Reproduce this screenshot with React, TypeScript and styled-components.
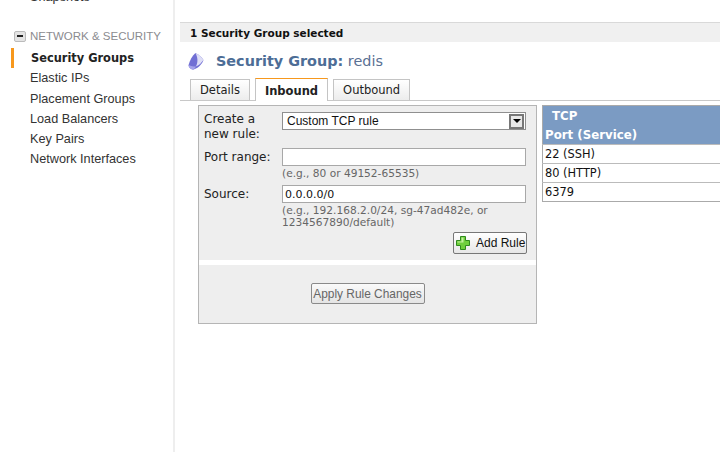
import React from 'react'
import styled, { createGlobalStyle } from 'styled-components'

const GlobalStyle = createGlobalStyle`
    html, body {
        margin: 0;
        padding: 0;
        width: 720px;
        height: 452px;
        overflow: hidden;
        background: #fff;
    }
`

const Page = styled.div`
    display: flex;
    width: 720px;
    height: 452px;
    overflow: hidden;
    font-family: "DejaVu Sans", Verdana, sans-serif;
    font-size: 11px;
    color: #111;
`

const Sidebar = styled.aside`
    flex: none;
    width: 175px;
    height: 100%;
    box-sizing: border-box;
    border-right: 2px solid #eeeeee;
    font-family: "Liberation Sans", Arial, sans-serif;
    font-size: 12.7px;
    overflow: hidden;
`

const CutItem = styled.div`
    margin: -13px 0 0 30px;
    height: 20px;
    line-height: 20px;
    color: #333;
`

const SectionHead = styled.div`
    display: flex;
    align-items: center;
    gap: 4px;
    margin: 19px 0 0 14px;
    height: 20px;
    font-size: 11.5px;
    color: #8b8b8f;
`

const Toggle = styled.span`
    display: flex;
    align-items: center;
    justify-content: center;
    width: 10px;
    height: 9px;
    border: 1px solid #bbb;
    border-radius: 2px;
    background: #e4e4e4;

    &::before {
        content: '';
        width: 6px;
        height: 2px;
        background: #222;
    }
`

const NavList = styled.div`
    display: flex;
    flex-direction: column;
    margin: 2px 0 0 11px;
`

const NavItem = styled.div<{ $active?: boolean }>`
    height: 20.3px;
    line-height: 20px;
    box-sizing: border-box;
    padding-left: ${p => (p.$active ? 17 : 16)}px;
    border-left: 3px solid ${p => (p.$active ? '#f7981d' : 'transparent')};
    color: ${p => (p.$active ? '#222' : '#333')};
    font-weight: ${p => (p.$active ? 700 : 400)};
    ${p => p.$active && 'font-family: "DejaVu Sans", Verdana, sans-serif; font-size: 11.4px;'}
`

const Main = styled.main`
    flex: 1;
    min-width: 0;
    padding: 22px 0 0 5px;
`

const SelectedBar = styled.div`
    height: 20px;
    line-height: 21px;
    box-sizing: border-box;
    padding-left: 10px;
    border-top: 1px solid #d9d9d9;
    background: #f0f0f0;
    font-weight: 700;
    font-size: 10.5px;
    color: #111;
`

const Heading = styled.h2`
    display: flex;
    align-items: center;
    gap: 12px;
    height: 36px;
    margin: 0;
    padding: 1px 0 0 8px;
    box-sizing: border-box;
    font-size: 14.4px;
    font-weight: 400;
    color: #5a7094;
`

const HeadLabel = styled.span`
    font-weight: 700;
    color: #4d6d96;
`

const TabRow = styled.div`
    display: flex;
    align-items: flex-end;
    gap: 5px;
    height: 22px;
    padding-left: 10px;
    border-bottom: 1px solid #c8c8c8;
`

const Tab = styled.div<{ $active?: boolean }>`
    box-sizing: border-box;
    padding: 0 9px;
    height: ${p => (p.$active ? 23 : 21)}px;
    line-height: ${p => (p.$active ? 24 : 20)}px;
    border: 1px solid #c4c4c4;
    border-bottom: none;
    ${p => p.$active && 'border-top: 1px solid #f7981d; margin-bottom: -1px; background: #fff; font-weight: 700;'}
    ${p => !p.$active && 'background: linear-gradient(#ffffff, #ececec);'}
    font-size: 11.5px;
    color: #222;
`

const Content = styled.div`
    display: flex;
    align-items: flex-start;
    gap: 5px;
    margin: 4px 0 0 18px;
`

const RuleForm = styled.section`
    flex: none;
    width: 339px;
    height: 219px;
    box-sizing: border-box;
    border: 1px solid #b5b5b5;
    background: #eeeeee;
`

const FormFields = styled.div`
    display: grid;
    grid-template-columns: 78px 244px;
    grid-template-rows: 37px 37px auto auto;
    padding: 5px 0 0 5px;
    height: 154px;
    box-sizing: border-box;
`

const FieldLabel = styled.label<{ $top: number }>`
    padding-top: ${p => p.$top}px;
    font-size: 12px;
    line-height: 15px;
    color: #222;
`

const FieldBody = styled.div<{ $top?: number }>`
    display: flex;
    flex-direction: column;
    padding-top: ${p => p.$top ?? 0}px;
`

const Select = styled.div`
    display: flex;
    align-items: center;
    justify-content: space-between;
    width: 244px;
    height: 18px;
    box-sizing: border-box;
    padding: 0 1px 0 4px;
    border: 1px solid #8f8f8f;
    background: #fff;
    font-family: "Liberation Sans", Arial, sans-serif;
    font-size: 12px;
    color: #111;
`

const SelectArrow = styled.span`
    display: flex;
    align-items: center;
    justify-content: center;
    width: 15px;
    height: 15px;
    box-sizing: border-box;
    border: 2px solid #777;
    background: #e8e8e8;

    &::before {
        content: '';
        border-left: 4px solid transparent;
        border-right: 4px solid transparent;
        border-top: 4px solid #000;
    }
`

const TextBox = styled.div`
    width: 244px;
    height: 18px;
    box-sizing: border-box;
    padding-left: 2px;
    border: 1px solid #a8a8a8;
    background: #fff;
    line-height: 17px;
    font-size: 11px;
    color: #111;
`

const Hint = styled.div`
    font-size: 10.6px;
    line-height: 12px;
    padding-top: 1px;
    color: #666;
`

const ButtonRow = styled.div`
    display: flex;
    justify-content: flex-end;
    margin: 4px -1px 0 0;
`

const AddButton = styled.button`
    display: flex;
    align-items: center;
    gap: 5px;
    width: 74px;
    height: 22px;
    padding: 0 0 0 1px;
    border: 1px solid #777;
    border-radius: 2px;
    background: linear-gradient(#ffffff, #e6e6e6);
    font-family: "Liberation Sans", Arial, sans-serif;
    font-size: 12px;
    color: #111;
`

const Divider = styled.div`
    height: 5px;
    background: #fff;
`

const ApplyRow = styled.div`
    display: flex;
    justify-content: center;
    padding: 18px 0 0 0;
`

const ApplyButton = styled.button`
    width: 114px;
    height: 21px;
    padding: 1px 0 0;
    border: 1px solid #8a8a8a;
    border-radius: 2px;
    background: linear-gradient(#fafafa, #e4e4e4);
    font-family: "Liberation Sans", Arial, sans-serif;
    font-size: 11.9px;
    color: #666;
`

const PortTable = styled.table`
    width: 190px;
    border-collapse: collapse;
    border: 1px solid #aaa;
    border-right: none;
    font-size: 11.4px;
    color: #111;
`

const HeadCell = styled.th<{ $indent?: boolean }>`
    height: 19px;
    padding: 0 0 0 ${p => (p.$indent ? 9 : 2)}px;
    background: #7b9bc3;
    color: #fff;
    text-align: left;
    font-weight: 700;
    font-size: 11.8px;
`

const BodyCell = styled.td`
    height: 18px;
    padding: 0 0 0 2px;
    border-top: 1px solid #bbb;
`

const PlusIcon = () => (
    <svg width="16" height="16" viewBox="0 0 16 16">
        <path
            d="M5.5 1.5h5v4h4v5h-4v4h-5v-4h-4v-5h4z"
            fill="#6fcf3c"
            stroke="#2f8a1c"
            strokeWidth="1"
        />
        <path d="M6.5 2.5h2v4h-2zM2.5 6.5h6v1h-6z" fill="#c4f0a0" />
    </svg>
)

const GroupIcon = () => (
    <svg width="16" height="18" viewBox="0 0 14 18" preserveAspectRatio="none">
        <path d="M6.5 1C9 2.5 12 5 13.5 8 12.5 12 9 16 5 17.5 2.500 17.500.5 15.500.5 13 1.500 8.500 3.500 4 6.500 1z" fill="#716fd4" />
        <path d="M6.500 1C9 2.500 12 5 13.500 8 12 10.500 10 13 7 14.500 9 10 8.500 5 6.500 1z" fill="#dedef6" />
        <path d="M.5 13c2 1 4.500 1.500 6.500 1.500-.5 1-1 2-2 3-2.500 0-4.500-2-4.500-4.500z" fill="#a5a3ea" />
    </svg>
)

const navItems = ['Elastic IPs', 'Placement Groups', 'Load Balancers', 'Key Pairs', 'Network Interfaces']
const ports = ['22 (SSH)', '80 (HTTP)', '6379']

export default function App() {
    return (
        <Page>
            <GlobalStyle />
            <Sidebar>
                <CutItem>Snapshots</CutItem>
                <SectionHead>
                    <Toggle />
                    NETWORK &amp; SECURITY
                </SectionHead>
                <NavList>
                    <NavItem $active>Security Groups</NavItem>
                    {navItems.map(item => (
                        <NavItem key={item}>{item}</NavItem>
                    ))}
                </NavList>
            </Sidebar>
            <Main>
                <SelectedBar>1 Security Group selected</SelectedBar>
                <Heading>
                    <GroupIcon />
                    <span>
                        <HeadLabel>Security Group:</HeadLabel> redis
                    </span>
                </Heading>
                <TabRow>
                    <Tab>Details</Tab>
                    <Tab $active>Inbound</Tab>
                    <Tab>Outbound</Tab>
                </TabRow>
                <Content>
                    <RuleForm>
                        <FormFields>
                            <FieldLabel $top={1}>
                                Create a
                                <br />
                                new rule:
                            </FieldLabel>
                            <FieldBody $top={1}>
                                <Select>
                                    Custom TCP rule
                                    <SelectArrow />
                                </Select>
                            </FieldBody>
                            <FieldLabel $top={2}>Port range:</FieldLabel>
                            <FieldBody>
                                <TextBox />
                                <Hint>(e.g., 80 or 49152-65535)</Hint>
                            </FieldBody>
                            <FieldLabel $top={2}>Source:</FieldLabel>
                            <FieldBody>
                                <TextBox>0.0.0.0/0</TextBox>
                                <Hint>
                                    (e.g., 192.168.2.0/24, sg-47ad482e, or
                                    <br />
                                    1234567890/default)
                                </Hint>
                                <ButtonRow>
                                    <AddButton>
                                        <PlusIcon />
                                        Add Rule
                                    </AddButton>
                                </ButtonRow>
                            </FieldBody>
                        </FormFields>
                        <Divider />
                        <ApplyRow>
                            <ApplyButton>Apply Rule Changes</ApplyButton>
                        </ApplyRow>
                    </RuleForm>
                    <PortTable>
                        <thead>
                            <tr>
                                <HeadCell $indent>TCP</HeadCell>
                            </tr>
                            <tr>
                                <HeadCell>Port (Service)</HeadCell>
                            </tr>
                        </thead>
                        <tbody>
                            {ports.map(port => (
                                <tr key={port}>
                                    <BodyCell>{port}</BodyCell>
                                </tr>
                            ))}
                        </tbody>
                    </PortTable>
                </Content>
            </Main>
        </Page>
    )
}
